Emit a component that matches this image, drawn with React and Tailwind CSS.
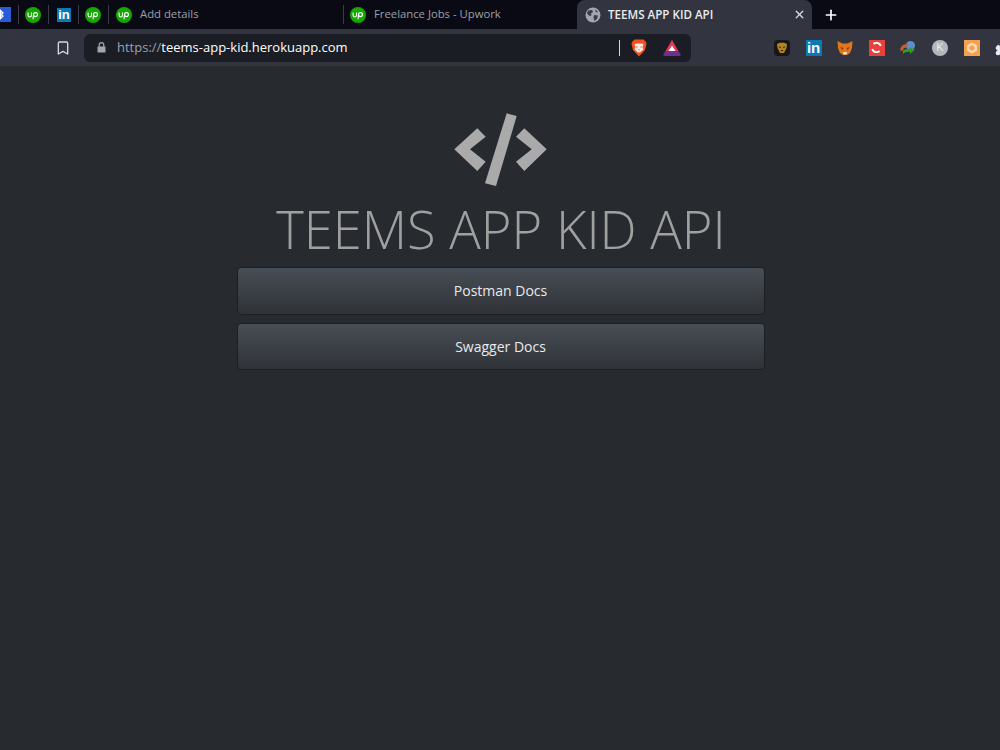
import { Bookmark, X, Plus, Puzzle } from 'lucide-react'

const UpworkIcon = () => (
  <svg width="16" height="16" viewBox="0 0 16 16" className="shrink-0">
    <circle cx="8" cy="8" r="8" fill="#14a800" />
    <path d="M3.1 5.4 V8.3 A1.7 1.7 0 0 0 6.5 8.3 V5.4" fill="none" stroke="#fff" strokeWidth="1.1" />
    <path d="M8 12.2 L8.5 8" fill="none" stroke="#fff" strokeWidth="1.1" />
    <circle cx="10.5" cy="7.6" r="2" fill="none" stroke="#fff" strokeWidth="1.1" />
  </svg>
)

const LinkedinIcon = () => (
  <div className="w-[14px] h-[14px] bg-[#0a78b5] flex items-center justify-center shrink-0 text-white text-[13px] font-bold leading-none pb-[1px] font-['Liberation_Sans',sans-serif]">
    in
  </div>
)

const GlobeIcon = () => (
  <svg width="16" height="16" viewBox="0 0 16 16" className="shrink-0">
    <circle cx="8" cy="8" r="7.5" fill="#a3a6ad" />
    <path d="M3 3.5 L7 3 L8 5 L6 6.5 L6.5 8.5 L4.5 9 L2 6.5 Z M9 8 L13 8.5 L12 12 L9.5 14 L8.5 11 Z M10 2.5 L13 4.5 L11 5.5 Z" fill="#3a3d48" />
  </svg>
)

const LockIcon = () => (
  <svg width="9" height="11" viewBox="0 0 9 11" className="shrink-0 mr-[11px]">
    <rect x="0.5" y="4.5" width="8" height="6" rx="0.5" fill="#a3a6ad" />
    <path d="M2.2 5 V3 A2.3 2.3 0 0 1 6.8 3 V5" fill="none" stroke="#a3a6ad" strokeWidth="1.2" />
  </svg>
)

const BraveIcon = () => (
  <svg width="16" height="18" viewBox="0 0 16 18">
    <path d="M3.5 0.5 H12.5 L15 3 L15.5 5 L14 11 L8 17.5 L2 11 L0.5 5 L1 3 Z" fill="#f1501f" />
    <path d="M3.5 5 L6 4.5 H10 L12.5 5 L11.5 8.5 L12.5 10.5 L9 13.5 H7 L3.5 10.5 L4.5 8.5 Z" fill="#fbe9e0" />
    <path d="M5 7 L7 8 L5.8 8.8 Z M11 7 L9 8 L10.2 8.8 Z M7 10.5 H9 L8 11.8 Z" fill="#f1501f" />
  </svg>
)

const TriangleIcon = () => (
  <svg width="18" height="16" viewBox="0 0 18 16">
    <path d="M9 0 L18 15 L16 16 H2 L0 15 Z" fill="#6f2f91" />
    <path d="M9 0 L15 11 H3 Z" fill="#f0364a" />
    <path d="M9 5.5 L12.5 11 H5.5 Z" fill="#fff" />
  </svg>
)

const extensions = [
  <div key="a" className="w-4 h-4 rounded-[4px] bg-[#17171a] flex items-center justify-center">
    <svg width="12" height="12" viewBox="0 0 12 12">
      <path d="M1 2 L4 0.8 H8 L11 2 L10.5 6 L8 11 H4 L1.5 6 Z" fill="#b5841c" />
      <path d="M3 4.2 L5.2 5.2 L3.8 6.2 Z M9 4.2 L6.8 5.2 L8.2 6.2 Z M4.5 8 H7.5 L6 9.5 Z" fill="#17171a" />
    </svg>
  </div>,
  <div key="b" className="w-4 h-4 bg-[#0a78b5] flex items-center justify-center text-white text-[15px] font-bold leading-none pb-[1px] font-['Liberation_Sans',sans-serif]">in</div>,
  <svg key="c" width="16" height="16" viewBox="0 0 16 16">
    <path d="M0.5 1 L5.5 3.5 H10.5 L15.5 1 L15 8 L13 13 L10 15 H6 L3 13 L1 8 Z" fill="#e2761b" />
    <path d="M3 7 L6.5 8 L5.5 10 Z M13 7 L9.5 8 L10.5 10 Z" fill="#763d16" />
    <path d="M6 12 H10 L9.5 14.5 H6.5 Z" fill="#f5e1cf" />
  </svg>,
  <div key="d" className="w-4 h-4 bg-[#e8403a] flex items-center justify-center">
    <svg width="11" height="11" viewBox="0 0 11 11" fill="none" stroke="#fff" strokeWidth="2">
      <path d="M9.8 4 A4.5 4.5 0 0 0 2.5 2" />
      <path d="M1.2 7 A4.5 4.5 0 0 0 8.5 9" />
    </svg>
  </div>,
  <svg key="e" width="16" height="16" viewBox="0 0 16 16">
    <circle cx="10.5" cy="5.5" r="4.5" fill="#5b8fc9" />
    <path d="M0 10 C1 5 5 3 8 5 L6 8 C4 7 3 9 3 11 Z" fill="#c9602a" />
    <path d="M3 11 C5 8.5 8 8.5 9 9.5 L10 7.5 L15 9.5 L10 14 L10 12 C7 11.5 5 12.5 3 14 Z" fill="#2f9e22" />
  </svg>,
  <div key="f" className="w-4 h-4 rounded-full bg-[#b4b6ba] flex items-center justify-center text-[#ececec] text-[11px] leading-none font-['Liberation_Sans',sans-serif]">K</div>,
  <div key="g" className="w-4 h-4 bg-[#f6a04d] flex items-center justify-center">
    <svg width="12" height="12" viewBox="0 0 12 12">
      <path d="M6 0.5 L11 3.2 V8.8 L6 11.5 L1 8.8 V3.2 Z" fill="#fbd9b5" />
      <circle cx="6" cy="6" r="2.5" fill="#f6a04d" />
    </svg>
  </div>,
  <Puzzle key="h" size={16} className="text-[#e8eaed] fill-[#e8eaed]" />,
]

export default function App() {
  return (
    <div className="min-h-screen w-full overflow-hidden bg-[#272b30] font-['Open_Sans',sans-serif]">
      {/* Tabs */}
      <div className="flex items-stretch h-[29px] bg-[#0a0a14] text-[11.3px]">
        <div className="w-[19px] flex items-center justify-end pr-[7px] border-r border-[#3a3d48] my-[5px] overflow-hidden">
          <div className="w-[15px] h-[15px] bg-[#2a5bd7] shrink-0 flex items-center justify-start">
            <svg width="9" height="15" viewBox="0 0 9 15" fill="none" stroke="#fff" strokeWidth="1.3">
              <path d="M1 4 L7 9 L4.5 11.5 V3.5 L7 6 L1 11" />
            </svg>
          </div>
        </div>
        <div className="w-[30px] flex items-center pl-[6px] border-r border-[#3a3d48] my-[5px]"><UpworkIcon /></div>
        <div className="w-[30px] flex items-center pl-2 border-r border-[#3a3d48] my-[5px]"><LinkedinIcon /></div>
        <div className="w-[30px] flex items-center pl-[6px] border-r border-[#3a3d48] my-[5px]"><UpworkIcon /></div>
        <div className="w-[235px] flex items-center gap-2 pl-[7px] border-r border-[#3a3d48] my-[5px] text-[#9ca0a8]">
          <UpworkIcon />
          <span>Add details</span>
        </div>
        <div className="w-[233px] flex items-center gap-2 pl-[6px] text-[#9ca0a8]">
          <UpworkIcon />
          <span>Freelance Jobs - Upwork</span>
        </div>
        <div className="w-[235px] flex items-center gap-[7px] pl-2 pr-[6px] rounded-t-lg bg-[#32353f] text-[#e8eaed] text-[11.6px] font-semibold">
          <GlobeIcon />
          <span className="flex-1">TEEMS APP KID API</span>
          <X size={13} strokeWidth={2.5} className="text-[#d5d7db]" />
        </div>
        <div className="flex items-center pl-[11px]">
          <Plus size={16} strokeWidth={2.5} className="text-white" />
        </div>
      </div>

      {/* Toolbar */}
      <div className="flex items-center h-[37px] bg-[#32353f] pl-[55px]">
        <Bookmark size={16} strokeWidth={2} className="text-[#d5d7db] shrink-0" />
        <div className="ml-[13px] w-[607px] h-7 shrink-0 rounded-md bg-[#1b1d25] flex items-center pl-[13px] pr-[10px] text-[13px]">
          <LockIcon />
          <span className="text-[#9ca0a8]">https://</span>
          <span className="text-white">teems-app-kid.herokuapp.com</span>
          <div className="ml-auto w-px h-4 bg-[#d5d7db]" />
          <div className="ml-[11px]"><BraveIcon /></div>
          <div className="ml-[16px]"><TriangleIcon /></div>
        </div>
        <div className="ml-[83px] flex items-center gap-[15.6px] shrink-0">
          {extensions}
        </div>
      </div>

      {/* Page */}
      <div className="flex flex-col items-center pt-[44px]">
        <svg width="100" height="80" viewBox="0 0 100 80" className="block">
          <path d="M56.7 3.3 L66.7 6 L46 76 L35 73.3 Z" fill="#aaaaaa" />
          <path d="M4.3 39.3 L27.3 18.3 L35.7 26.7 L20 39.3 L35.7 51.7 L27.3 61 Z" fill="#aaaaaa" />
          <path d="M96.7 39.3 L74.3 18.3 L66 26.7 L81.7 39.3 L66 51.7 L74.3 61 Z" fill="#aaaaaa" />
        </svg>
        <h1 className="text-[52.5px] leading-[77px] pl-[2px] font-light text-[#a0a0a0] whitespace-nowrap">TEEMS APP KID API</h1>
        <div className="w-[528px] ml-px flex flex-col gap-2">
          {['Postman Docs', 'Swagger Docs'].map((label) => (
            <button
              key={label}
              className="h-[47.5px] pt-px rounded border border-[#1c1e22] bg-gradient-to-b from-[#484e55] to-[#2f3338] text-[#e8eaed] text-sm"
            >
              {label}
            </button>
          ))}
        </div>
      </div>
    </div>
  )
}
